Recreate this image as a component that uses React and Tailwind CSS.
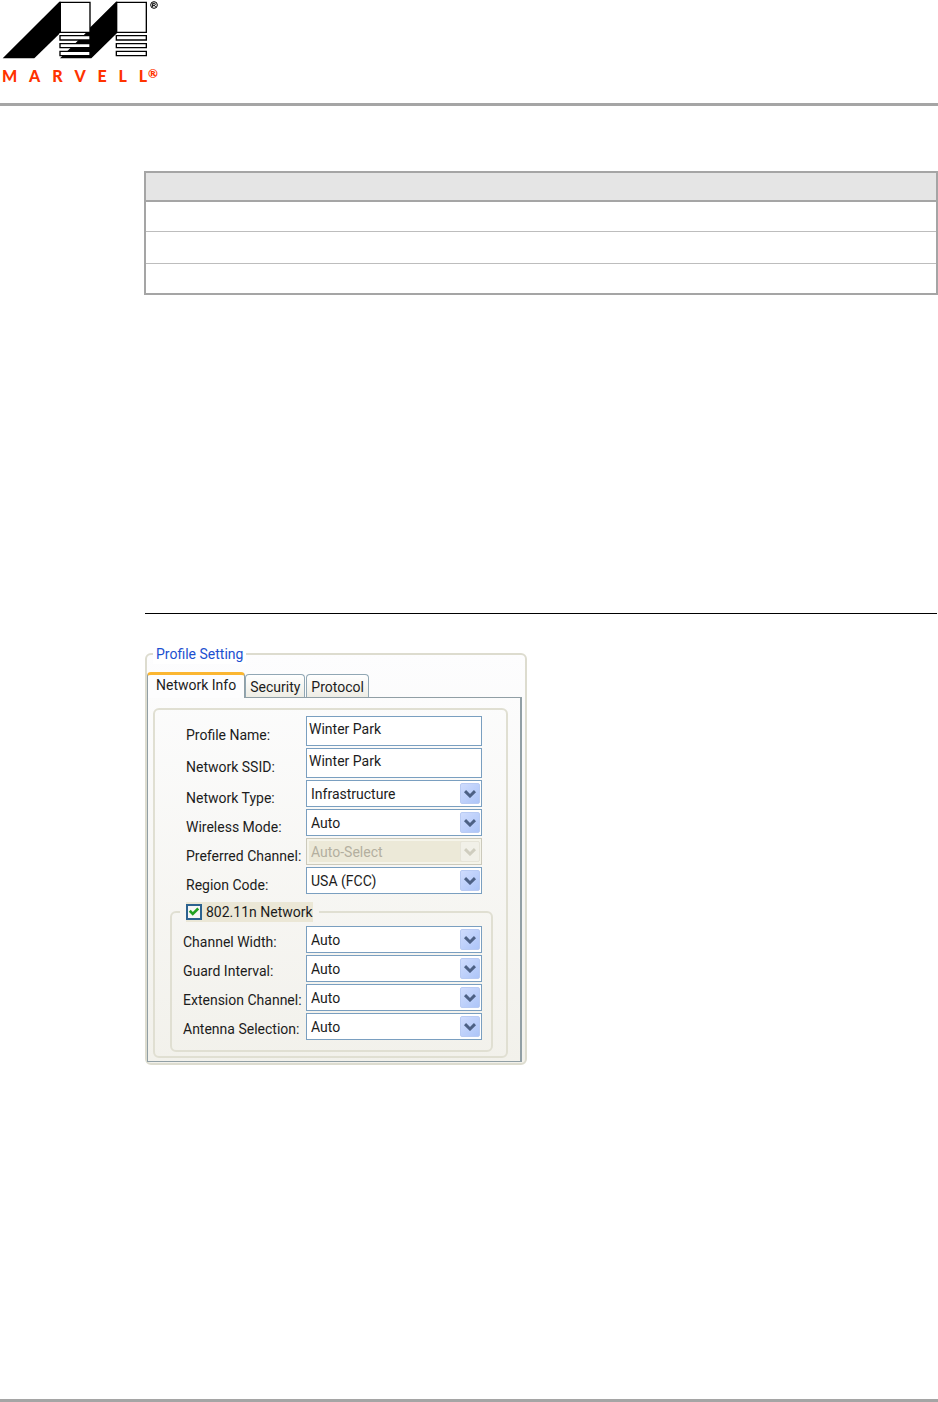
import React, { useState } from 'react';

const TABS = ['Network Info', 'Security', 'Protocol'];

const PROFILE_FIELDS = [
  { id: 'networkType', label: 'Network Type:', options: ['Infrastructure', 'Ad-Hoc'] },
  { id: 'wirelessMode', label: 'Wireless Mode:', options: ['Auto'] },
  { id: 'preferredChannel', label: 'Preferred Channel:', options: ['Auto-Select'], disabled: true },
  { id: 'regionCode', label: 'Region Code:', options: ['USA (FCC)'] },
];

const NETWORK_FIELDS = [
  { id: 'channelWidth', label: 'Channel Width:', options: ['Auto'] },
  { id: 'guardInterval', label: 'Guard Interval:', options: ['Auto'] },
  { id: 'extensionChannel', label: 'Extension Channel:', options: ['Auto'] },
  { id: 'antennaSelection', label: 'Antenna Selection:', options: ['Auto'] },
];

const Logo = () => (
  <div className="w-40">
    <svg viewBox="0 0 480 180" className="block w-40 h-[60px]" aria-hidden="true">
      <path d="M8 175 178 5h4v93l-2 2-77 75z" />
      <path d="M268 85 348 5h4v93l-78 77h-94l78-77h10z" />
      <g fill="#fff" stroke="#000" strokeWidth="4">
        <path d="M181 7h89v90h-89zM350 7h89v90h-89z" />
        <path d="M349 107h90v13h-90zM349 131h90v12h-90zM349 154h90v13h-90z" />
      </g>
      <path d="M178 100h78l-6 5h-72zM178 123h49l-6 5h-43zM178 146h25l-6 5h-19z" fill="#fff" />
      <path d="M178 105h90v17h-90zM178 129h90v16h-90zM178 152h90v17h-90z" />
      <path d="M182 109h86v9h-86zM182 133h86v8h-86zM182 156h86v9h-86z" fill="#fff" />
      <circle cx="462" cy="15" r="10" fill="none" stroke="#000" strokeWidth="3" />
      <path d="M458 21V10h5a3 3 0 0 1 0 6h-5m5 0 4 5" fill="none" stroke="#000" strokeWidth="3" />
    </svg>
    <div className="mt-2 flex items-center justify-between px-0.5 text-base leading-4 font-black text-[#ff3300] font-['Lato',sans-serif]">
      <span>M</span>
      <span>A</span>
      <span>R</span>
      <span>V</span>
      <span>E</span>
      <span>L</span>
      <span className="flex gap-px">
        L<sup className="top-0 text-xs leading-3">®</sup>
      </span>
    </div>
  </div>
);

const RevisionTable = () => (
  <table className="w-full border-separate border-spacing-0 border-2 border-[#a5a5a5]" aria-label="Revisions">
    <thead>
      <tr>
        <th className="h-[29px] border-b-2 border-[#a5a5a5] bg-[#e5e5e5] p-0" />
      </tr>
    </thead>
    <tbody>
      <tr>
        <td className="h-[30px] border-b border-[#bdbdbd] p-0" />
      </tr>
      <tr>
        <td className="h-8 border-b border-[#bdbdbd] p-0" />
      </tr>
      <tr>
        <td className="h-[29px] p-0" />
      </tr>
    </tbody>
  </table>
);

const TextRow = ({ id, label, value, onChange }) => (
  <>
    <label htmlFor={id} className="pt-2 leading-4">{label}</label>
    <input
      id={id}
      type="text"
      value={value}
      onChange={(e) => onChange(e.target.value)}
      className="h-[30px] w-full border border-[#7a9fc0] bg-white px-0.5 pb-1 outline-none"
    />
  </>
);

const SelectRow = ({ id, label, options, disabled, labelClass }) => (
  <>
    <label htmlFor={id} className={labelClass}>{label}</label>
    <div className="relative">
      <select
        id={id}
        disabled={disabled}
        className="block h-[27px] w-full appearance-none border border-[#7a9fc0] bg-white pl-1 pr-6 outline-none disabled:border-[#cbc9bb] disabled:bg-[#ece9d8] disabled:text-[#b3af9f] disabled:opacity-100 disabled:inset-ring-2 disabled:inset-ring-[#f5f4ea]"
      >
        {options.map((option) => (
          <option key={option}>{option}</option>
        ))}
      </select>
      {/* Drop-down arrow */}
      <span
        className={`pointer-events-none absolute top-[3px] right-0.5 flex h-[21px] w-5 items-center justify-center rounded-xs border ${
          disabled
            ? 'border-[#e6e4d8] bg-[#f1f0e8] text-[#cfcdbf]'
            : 'border-[#b9cbf3] bg-linear-to-br from-[#cfdcfd] to-[#adc5f8] text-[#4d6185]'
        }`}
      >
        <svg width="12" height="8" viewBox="0 0 12 8" fill="none" stroke="currentColor" strokeWidth="3">
          <path d="M1 1.2 6 6 11 1.2" />
        </svg>
      </span>
    </div>
  </>
);

const ProfileSetting = () => {
  const [activeTab, setActiveTab] = useState('Network Info');
  const [profileName, setProfileName] = useState('Winter Park');
  const [ssid, setSsid] = useState('Winter Park');
  const [is11n, setIs11n] = useState(true);

  return (
    <fieldset className="w-full max-w-[382px] min-w-0 rounded-md border-2 border-[#dddccf] bg-linear-to-b from-[#fdfdfe] to-[#f2f1eb] pt-2 pb-px text-sm leading-5 text-[#1c1c1c] font-['Roboto',sans-serif]">
      <legend className="ml-1.5 h-5 bg-white px-[3px] text-[#1c50d0]">Profile Setting</legend>

      {/* Tabs */}
      <div className="flex items-end" role="tablist">
        {TABS.map((tab) => (
          <button
            key={tab}
            type="button"
            role="tab"
            aria-selected={activeTab === tab}
            onClick={() => setActiveTab(tab)}
            className={
              activeTab === tab
                ? 'z-10 -mb-px h-[26px] rounded-t-sm border border-t-[3px] border-b-0 border-[#919fa5] border-t-[#fbb631] bg-[#fdfdfe] px-2 pb-1'
                : 'mr-px h-[23px] rounded-t-sm border border-b-0 border-[#91a7b4] bg-linear-to-b from-white to-[#eeede5] px-1 pt-0.5'
            }
          >
            {tab}
          </button>
        ))}
      </div>

      <div className="mr-[3px] border border-r-2 border-[#919fa5] pt-2.5 pr-3 pb-[3px] pl-[5px]">
        <div className="rounded-md border-2 border-[#e0dfd2] pt-1.5 pb-1">
          <div className="grid grid-cols-[120px_176px] items-center gap-y-0.5 pl-[31px]">
            <TextRow id="profileName" label="Profile Name:" value={profileName} onChange={setProfileName} />
            <TextRow id="networkSsid" label="Network SSID:" value={ssid} onChange={setSsid} />
            {PROFILE_FIELDS.map((field) => (
              <SelectRow key={field.id} {...field} labelClass="pt-2 leading-4" />
            ))}
          </div>

          {/* 802.11n options */}
          <fieldset className="mt-2 mr-[13px] ml-[15px] min-w-0 rounded-md border-2 border-[#e0dfd2] pt-1 pb-2.5">
            <legend className="ml-2 h-5 bg-[#f6f5f2] px-1.5">
              <label className="flex h-5 items-center gap-1 bg-[#ebe7d6]">
                <span className="relative flex">
                  <input
                    type="checkbox"
                    checked={is11n}
                    onChange={(e) => setIs11n(e.target.checked)}
                    className="size-4 appearance-none border-2 border-[#2c628f] bg-[#f7f7f5]"
                  />
                  {is11n && (
                    <svg
                      className="pointer-events-none absolute inset-0 size-4"
                      viewBox="0 0 17 17"
                      fill="none"
                      stroke="#21a121"
                      strokeWidth="2.8"
                    >
                      <path d="M4 7.2 7.2 10.6 13 4.8" />
                    </svg>
                  )}
                </span>
                802.11n Network
              </label>
            </legend>
            <div className="grid grid-cols-[123px_176px] items-center gap-y-0.5 pl-[11px]">
              {NETWORK_FIELDS.map((field) => (
                <SelectRow key={field.id} {...field} labelClass="pt-1 leading-4" />
              ))}
            </div>
          </fieldset>
        </div>
      </div>
    </fieldset>
  );
};

const App = () => {
  return (
    <div className="flex min-h-screen flex-col bg-white">
      <header className="h-[106px] border-b-3 border-[#a5a5a5]">
        <Logo />
      </header>

      <main className="pt-[65px] pb-10 pl-36">
        <RevisionTable />
        <section className="mt-[318px] px-px">
          <hr className="mb-[30px] border-black" />
          <ProfileSetting />
        </section>
      </main>

      <footer className="mt-auto h-[3px] bg-[#a5a5a5]" />
    </div>
  );
};

export default App;
